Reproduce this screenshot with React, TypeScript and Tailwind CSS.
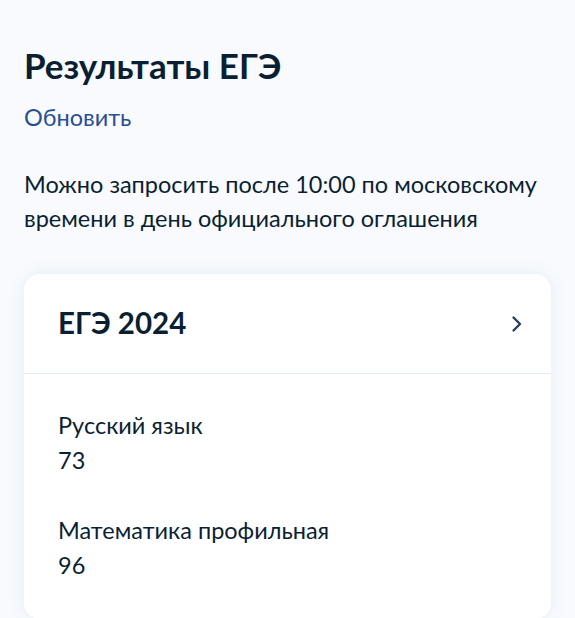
export default function App() {
  const results = [
    { subject: 'Русский язык', score: 73 },
    { subject: 'Математика профильная', score: 96 },
  ]

  return (
    <div className="min-h-[618px] bg-[#f8fafd] px-6 pt-[41px] text-[#0b1f33]" style={{ fontFamily: 'Lato, "Noto Sans", sans-serif' }}>
      <h1 className="text-[35px] font-bold leading-[48px]">Результаты ЕГЭ</h1>
      <button className="mt-[14px] text-[23.5px] leading-[28px] text-[#2a4f93]">Обновить</button>

      <p className="mt-[35px] text-[23.5px] leading-[34px]">
        Можно запросить после 10:00 по московскому времени в день официального оглашения
      </p>

      <div className="mt-[39px] rounded-2xl bg-white shadow-[0_0_16px_rgba(102,150,204,0.12)]">
        {/* Header */}
        <div className="flex h-[100px] items-center justify-between border-b border-[#e6ebf0] pl-[34px] pr-[28px]">
          <span className="text-[29.5px] font-bold">ЕГЭ 2024</span>
          <svg width="12" height="18" viewBox="0 0 12 18" fill="none">
            <path d="M2.5 2.5L9 9l-6.5 6.5" stroke="#2c3e64" strokeWidth="2.4" strokeLinecap="round" strokeLinejoin="round" />
          </svg>
        </div>

        {/* Results */}
        <div className="flex flex-col gap-[35px] px-[34px] pt-[34px] pb-[36px]">
          {results.map((r) => (
            <div key={r.subject} className="text-[23.5px] leading-[35px]">
              <div>{r.subject}</div>
              <div>{r.score}</div>
            </div>
          ))}
        </div>
      </div>
    </div>
  )
}
